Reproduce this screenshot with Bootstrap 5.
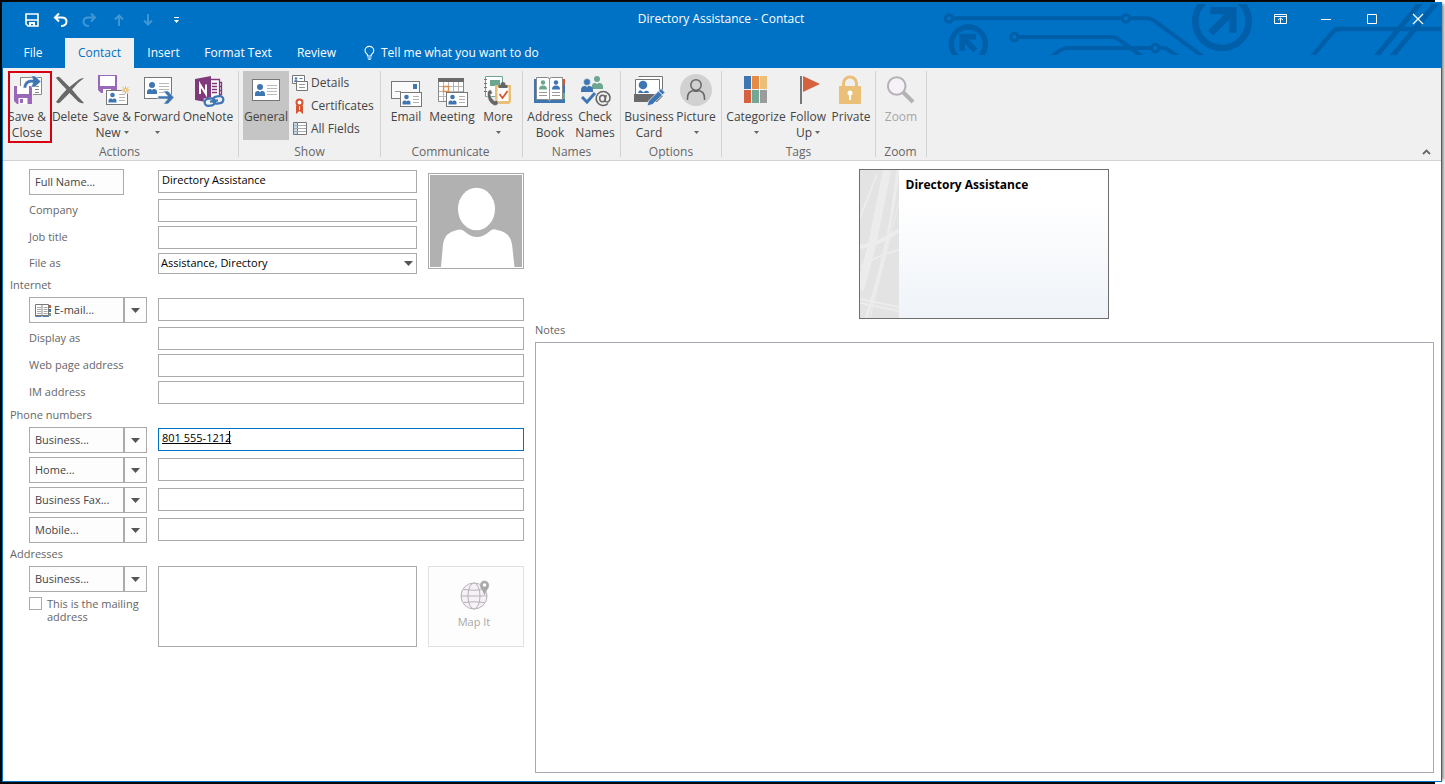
<!DOCTYPE html>
<html lang="en">
<head>
<meta charset="utf-8">
<meta name="viewport" content="width=device-width, initial-scale=1">
<title>Directory Assistance - Contact</title>
<link rel="stylesheet" href="https://cdn.jsdelivr.net/npm/bootstrap@5.3.0/dist/css/bootstrap.min.css">
<style>
:root { --ol-blue: #0072c6; --ol-line: #ababab; --ol-ink: #444; --ol-soft: #666; }
body { font-family: "Open Sans", "Segoe UI", sans-serif; font-size: 12px; line-height: 16px; color: var(--ol-ink);
  background: linear-gradient(#060606, #060606) 0 0 / calc(100% - 10px) 100% no-repeat #fff; padding: 2px 3px 2px 2px; }
button, input, textarea, select { font: inherit; color: inherit; }
button { background: none; border: 0; padding: 0; }
svg { overflow: visible; flex: none; }
.app-window { min-height: calc(100vh - 4px); border: 1px solid var(--ol-blue); border-top: 0; background: #fff; box-shadow: 4px 0 3px -2px #888; }

/* title bar and tabs */
.titlebar { background: var(--ol-blue); color: #fff; height: 66px; }
.circuit { right: 0; top: 0; width: 511px; height: 53px; pointer-events: none; }
.caption-row { height: 34px; padding-right: 2px; }
.quick { left: 14px; top: 0; height: 34px; }
.quick button { width: 29px; height: 34px; }
.quick .off { opacity: .25; }
.winbtns { right: 0; top: 0; }
.winbtns button { width: 46px; height: 32px; }
.tabs { height: 32px; padding-top: 2px; }
.tabs a { height: 30px; line-height: 30px; text-align: center; color: #fff; text-decoration: none; }
.tabs .t-file { width: 60px; margin-right: 2px; }
.tabs .t-contact { width: 69px; background: #f0f0f0; color: var(--ol-blue); }
.tabs .t-insert { width: 59px; }
.tabs .t-format { width: 90px; }
.tabs .t-review { width: 67px; }
.tellme { margin-left: 14px; gap: 6px; }

/* ribbon */
.ribbon { background: #f0f0f0; height: 93px; border-bottom: 1px solid #d2d2d2; padding-top: 3px; }
.rgroup { border-right: 1px solid #d2d2d2; height: 86px; }
.rgroup-title { color: var(--ol-soft); text-align: center; margin-top: 3px; padding-right: 4px; }
.rbtns { height: 70px; }
.rb { display: flex; flex-direction: column; align-items: center; padding-top: 4px; white-space: nowrap; height: 70px; }
.rb svg.ic { width: 32px; height: 32px; margin-bottom: 2px; }
.rb.on { background: #c5c5c5; height: 69px; }
.rb:disabled { color: #a6a6a6; }
.rb .dn { margin: 6px auto; display: block; }
.rb .dn-in { display: inline-block; margin: 0 0 3px 3px; }
.w42 { width: 42px; } .w44 { width: 44px; } .w46 { width: 46px; } .w48 { width: 48px; } .w54 { width: 54px; } .w60 { width: 60px; }
.g-actions { width: 236px; padding-left: 2px; }
.g-show { width: 142px; padding-left: 4px; }
.g-comm { width: 142px; padding-left: 2px; }
.g-names { width: 98px; padding-left: 4px; }
.g-options { width: 101px; padding-left: 4px; }
.g-tags { width: 154px; padding-left: 4px; }
.g-zoom { width: 51px; padding-left: 1px; }
.g-zoom .rgroup-title { padding-right: 2px; }
.smallbtns { padding-left: 3px; }
.smallbtns button { height: 23px; gap: 3px; }
.highlight { left: 5px; top: 0; width: 44px; height: 72px; border: 2px solid #d8000f; }
.collapse-btn { right: 10px; bottom: 5px; line-height: 8px; }

/* form */
.contact-form { padding: 6px 7px 8px 7px; gap: 11px; font-size: 11px; }
.fields { width: 514px; }
.names-col { width: 407px; }
.frow { display: flex; align-items: center; height: 27px; padding-left: 19px; color: var(--ol-soft); }
.frow.tall { height: 30px; }
.frow.short { height: 25px; }
.flabel { width: 129px; flex: none; }
label.flabel { padding-bottom: 2px; }
.fhead { height: 19px; line-height: 18px; color: var(--ol-soft); margin: 0; font-size: 11px; font-weight: 400; }
.fbtn { width: 95px; height: 26px; border: 1px solid var(--ol-line); background: #fdfdfd; color: var(--ol-ink); padding: 0 5px; text-align: left; display: flex; align-items: center; gap: 3px; white-space: nowrap; }
.fdrop { width: 23px; height: 26px; border: 1px solid var(--ol-line); background: #fdfdfd; display: flex; align-items: center; justify-content: center; }
.fin { flex: 1; min-width: 0; width: 100%; height: 23px; border: 1px solid var(--ol-line); border-radius: 0; padding: 0 3px 3px; color: #000; background: #fff; outline: 0; }
.frow.tall .fin { margin-bottom: 2px; }
.fin.active-field { border-color: var(--ol-blue); text-decoration: underline; }
.fin-caret { left: 71px; top: 3px; width: 1px; height: 13px; background: #000; }
select.fin { height: 21px; padding: 0 2px 1px; appearance: none; }
.sel-arrow { right: 4px; top: 8px; pointer-events: none; }
.photo { width: 96px; height: 96px; margin: 6px 0 0 11px; border: 1px solid var(--ol-line); padding: 1px; background: #fff; }
.addr { padding: 2px 0 0 19px; }
.addr-left { width: 129px; }
.addr textarea { height: 81px; border: 1px solid var(--ol-line); resize: none; outline: 0; min-width: 0; }
.mail-check { gap: 5px; margin-top: 5px; line-height: 13px; color: var(--ol-soft); }
.mail-check input { appearance: none; width: 13px; height: 13px; border: 1px solid var(--ol-line); background: #fff; flex: none; margin: 0; }
.mapit { width: 96px; height: 81px; margin-left: 11px; border: 1px solid #e1e1e1; background: #fdfdfd; padding: 0 4px 2px 0; gap: 3px; }
.mapit:disabled { color: #a8a8a8; }
.bizcard { width: 250px; height: 150px; margin-top: 2px; margin-right: 2px; border: 1px solid #6e6e6e; background: linear-gradient(#fff 20%, #eff3f8); }
.bizcard-name { font-size: 12px; font-weight: 700; color: #000; padding: 7px; }
.notes-label { margin-top: 3px; color: var(--ol-soft); }
.notes { border: 1px solid #a5aab5; resize: none; outline: 0; margin-top: 4px; min-height: 100px; border-radius: 0; }
.form-body { min-height: calc(100vh - 164px); }
</style>
</head>
<body>
<svg width="0" height="0" class="position-absolute" aria-hidden="true">
  <defs>
    <symbol id="caret" viewBox="0 0 5 3"><path d="M0 0h5L2.500 3z" fill="#666"/></symbol>
    <symbol id="arrow" viewBox="0 0 9 5"><path d="M0 0h9L4.500 5z" fill="#555"/></symbol>
    <symbol id="vcard" viewBox="0 0 28 22">
      <rect x=".5" y=".5" width="27" height="21" fill="#fff" stroke="#777"/>
      <circle cx="8" cy="8" r="3" fill="#3e76b3"/>
      <path d="M3 17v-2q0-3 3-3h1l1 1.500 1-1.500h1q3 0 3 3v2z" fill="#3e76b3"/>
      <path d="M15 6.500h10M15 9.500h10M15 12.500h10M15 15.500h10" stroke="#b9b9b9"/>
    </symbol>
    <symbol id="vcard-s" viewBox="0 0 22 16">
      <rect x=".5" y=".5" width="21" height="14" fill="#fff" stroke="#777"/>
      <circle cx="6.500" cy="5" r="2.300" fill="#3e76b3"/>
      <path d="M2.500 12.500v-2q0-2 2-2h1l1 1 1-1h1q2 0 2 2v2z" fill="#3e76b3"/>
      <path d="M13 4.500h6M13 7.500h6M13 10.500h6" stroke="#b0b0b0"/>
    </symbol>
  </defs>
</svg>

<div class="app-window d-flex flex-column">
  <header class="titlebar position-relative">
    <svg class="circuit position-absolute" viewBox="0 6 1533 159" fill="none" stroke="#005fa8" stroke-width="12" aria-hidden="true">
      <clipPath id="strip"><rect x="0" y="12" width="1533" height="153"/></clipPath>
      <g clip-path="url(#strip)">
        <circle cx="57" cy="55" r="11" stroke-width="9"/><circle cx="588" cy="55" r="11" stroke-width="9"/>
        <path d="M69 55H576M600 55H650Q662 55 672 62L822 172"/>
        <circle cx="115" cy="132" r="51" stroke-width="16"/>
        <path d="M138 110H96V152M98 112l38 40" stroke-width="17"/>
        <circle cx="253" cy="111" r="11" stroke-width="9"/><path d="M265 111H545Q556 111 566 118L640 172"/>
        <path d="M362 172L386 154Q400 144 412 144H664M689 144Q704 142 716 150L750 174"/><circle cx="676" cy="144" r="11" stroke-width="9"/>
        <circle cx="876" cy="64" r="80" stroke-width="20"/>
        <path d="M840 32H909V98M908 33l-66 66" stroke-width="22"/>
        <path d="M1142 174L1208 97Q1215 87 1226 87H1533" stroke-width="13"/>
        <path d="M1336 172L1475 4M1384 172L1523 4" stroke-width="15"/>
      </g>
    </svg>
    <div class="caption-row d-flex align-items-center justify-content-center">Directory Assistance - Contact</div>
    <div class="quick position-absolute d-flex">
      <button type="button" aria-label="Save"><svg width="14" height="14" viewBox="0 0 14 14"><path d="M1 1h12v12H3l-2-2zM1 7h12" fill="none" stroke="#fff" stroke-width="1.600"/><path d="M4 9h6v4H8v-2H6v2H4z" fill="#fff"/></svg></button>
      <button type="button" aria-label="Undo"><svg width="15" height="14" viewBox="0 0 15 14"><path d="M2 4.500h6.500q5 0 5 4t-5 4.500H8M6 .500L2 4.500l4 4" fill="none" stroke="#fff" stroke-width="2"/></svg></button>
      <button type="button" aria-label="Redo" class="off"><svg width="15" height="14" viewBox="0 0 15 14"><path d="M13 4.500H6.500q-5 0-5 4t5 4.500H7M9 .500l4 4-4 4" fill="none" stroke="#fff" stroke-width="2"/></svg></button>
      <button type="button" aria-label="Previous" class="off"><svg width="10" height="12" viewBox="0 0 10 12"><path d="M5 12V1.500M1 5.500l4-4 4 4" fill="none" stroke="#fff" stroke-width="2"/></svg></button>
      <button type="button" aria-label="Next" class="off"><svg width="10" height="12" viewBox="0 0 10 12"><path d="M5 0v10.500M1 6.500l4 4 4-4" fill="none" stroke="#fff" stroke-width="2"/></svg></button>
      <button type="button" aria-label="Customize toolbar"><svg width="5" height="6" viewBox="0 0 5 6"><path d="M0 0h5v1H0zM0 3h5L2.500 6z" fill="#fff"/></svg></button>
    </div>
    <div class="winbtns position-absolute d-flex">
      <button type="button" aria-label="Ribbon display options"><svg width="13" height="10" viewBox="0 0 13 10"><path d="M.5.5h12v9H.5zM.5 2.500h12M6.500 9V4M4 6l2.500-2L9 6" fill="none" stroke="#fff"/></svg></button>
      <button type="button" aria-label="Minimize"><svg width="10" height="10" viewBox="0 0 10 10"><path d="M0 5.500h10" stroke="#fff"/></svg></button>
      <button type="button" aria-label="Maximize"><svg width="10" height="10" viewBox="0 0 10 10"><path d="M.5.5h9v9h-9z" fill="none" stroke="#fff"/></svg></button>
      <button type="button" aria-label="Close"><svg width="10" height="10" viewBox="0 0 10 10"><path d="M0 0l10 10M10 0L0 10" stroke="#fff" stroke-width="1.200"/></svg></button>
    </div>
    <nav class="tabs d-flex" aria-label="Ribbon tabs">
      <a href="#" class="t-file">File</a>
      <a href="#" class="t-contact">Contact</a>
      <a href="#" class="t-insert">Insert</a>
      <a href="#" class="t-format">Format Text</a>
      <a href="#" class="t-review">Review</a>
      <a href="#" class="tellme d-flex align-items-center"><svg width="11" height="14" viewBox="0 0 11 14"><path d="M3.500 10V8.500Q1 7 1 4.700A4.300 4.200 0 0 1 9.800 4.700Q9.800 7 7.300 8.500V10zM3.500 12h4M4.500 13.500h2" fill="none" stroke="#fff" stroke-width="1.100"/></svg>Tell me what you want to do</a>
    </nav>
  </header>

  <section class="ribbon position-relative d-flex">
    <div class="rgroup g-actions position-relative">
      <div class="rbtns d-flex">
        <button type="button" class="rb w44"><svg class="ic" viewBox="0 0 32 32">
          <path d="M9.500 12V2.500h21v17H22M24 11.500h4M24 14.500h4M24 17.500h4" fill="#fff" stroke="#888"/>
          <path d="M3 11h18v18H6l-3-3z" fill="#9a68b8"/><path d="M6 11h12v8H6z" fill="#fff"/><path d="M7.500 23h9v6h-9z" fill="#fff"/><path d="M9 24h3v4H9z" fill="#9a68b8"/>
          <path d="M12 13Q13 3.500 22 4.500L20 1h4l6 5.500-6 5.500h-4l2-4Q16 7 15.500 13z" fill="#3e76b3" stroke="#f0f0f0" stroke-width=".6"/></svg><span>Save &amp;<br>Close</span></button>
        <button type="button" class="rb w42"><svg class="ic" viewBox="0 0 32 32"><path d="M2 3Q4 1 6 2.500L15.500 12 25 4.500q3-2 5-1.500-7 5-12 11.500Q23 21 30 28q-3 1-6-1.500L15.500 18 6 27.500Q4 29 2 27q5-7 10.500-12.500Q7 9 2 3z" fill="#686868"/></svg><span>Delete</span></button>
        <button type="button" class="rb w42"><svg class="ic" viewBox="0 0 32 32">
          <path d="M2 0h19v18H5l-3-3z" fill="#9a68b8"/><path d="M4 1h15v10H4zM7 14h8v4H7z" fill="#fff"/>
          <use href="#vcard-s" x="10" y="15" width="22" height="16"/>
          <circle cx="29.500" cy="15" r="4" fill="#f0f0f0"/><path d="M29.500 11v8M25.500 15h8M26.700 12.200l5.600 5.600M32.300 12.200l-5.600 5.600" stroke="#e9b75d"/><circle cx="29.500" cy="15" r="1.500" fill="#fff" stroke="#e9b75d"/></svg><span>Save &amp;<br>New<svg class="dn-in" width="5" height="3"><use href="#caret"/></svg></span></button>
        <button type="button" class="rb w48"><svg class="ic" viewBox="0 0 32 32"><use href="#vcard" x="3" y="2" width="28" height="22"/>
          <path d="M17 21h9.500L22.500 16H27l6 6.500-6 6.500h-4.500l4-5H17z" fill="#3e76b3" stroke="#f0f0f0" stroke-width=".6"/></svg><span>Forward<svg class="dn" width="5" height="3"><use href="#caret"/></svg></span></button>
        <button type="button" class="rb w54"><svg class="ic" viewBox="0 0 32 32">
          <path d="M18 4.500h9.500v20H18M27.500 7.500h2v4h-2M27.500 11.500h2v4h-2M27.500 15.500h2v4h-2M20 8.500h5M20 11.500h5M20 14.500h5M20 17.500h5" fill="#fff" stroke="#80397b" stroke-width="1.300"/>
          <path d="M3 4L19 1v27L3 25z" fill="#80397b"/><path d="M8 19V9.500L14 19V9.500" fill="none" stroke="#fff" stroke-width="2"/>
          <g transform="rotate(-8 22 26)" fill="none"><path d="M12 22h20v9H12z" fill="#f0f0f0"/><g stroke="#3e76b3" stroke-width="2.200"><rect x="12.500" y="23" width="10.500" height="7" rx="3.500"/><rect x="21" y="22" width="10.500" height="7" rx="3.500"/><path d="M18 26h8"/></g></g></svg><span>OneNote</span></button>
      </div>
      <div class="rgroup-title">Actions</div>
      <div class="highlight position-absolute"></div>
    </div>
    <div class="rgroup g-show">
      <div class="rbtns d-flex">
        <button type="button" class="rb on w46"><svg class="ic" viewBox="0 0 32 32"><use href="#vcard" x="2" y="4" width="28" height="22"/></svg><span>General</span></button>
        <div class="smallbtns d-flex flex-column">
          <button type="button" class="d-flex align-items-center"><svg width="16" height="16" viewBox="0 0 16 16"><path d="M.5.5h12v8H.5z" fill="#fff" stroke="#777"/><circle cx="4" cy="3.500" r="1.300" fill="#3e76b3"/><path d="M2 7q0-2 2-2t2 2zM7.500 3h3v1h-3z" fill="#3e76b3"/><path d="M4.500 6.500h11v9h-11z" fill="#fff" stroke="#777"/><path d="M7 9.500h6M7 12.500h6" stroke="#999"/></svg>Details</button>
          <button type="button" class="d-flex align-items-center"><svg width="16" height="16" viewBox="0 0 16 16"><circle cx="7.500" cy="4.500" r="3" fill="#fff" stroke="#d65532" stroke-width="2"/><path d="M4 7.500h7V16l-3.500-3L4 16z" fill="#d65532"/><path d="M7.500 8v4" stroke="#f0f0f0"/></svg>Certificates</button>
          <button type="button" class="d-flex align-items-center"><svg width="16" height="16" viewBox="0 0 16 16"><path d="M1.500 1.500h13v12h-13z" fill="#fff" stroke="#777"/><path d="M2 2h3v11H2z" fill="#c3d9ee"/><path d="M5.500 2v11" stroke="#777"/><path d="M2 4.500h12M2 7.500h12M2 10.500h12" stroke="#aaa"/></svg>All Fields</button>
        </div>
      </div>
      <div class="rgroup-title">Show</div>
    </div>
    <div class="rgroup g-comm">
      <div class="rbtns d-flex">
        <button type="button" class="rb w46"><svg class="ic" viewBox="0 0 32 32"><rect x="1.500" y="6.500" width="28" height="17" fill="#fafafa" stroke="#777"/><path d="M23 9h4v5h-4z" fill="#3e76b3"/><path d="M5 16.500h6" stroke="#999"/><use href="#vcard-s" x="10" y="17" width="22" height="16"/></svg><span>Email</span></button>
        <button type="button" class="rb w46"><svg class="ic" viewBox="0 0 32 32"><path d="M2.500 4.500h25v22h-25z" fill="#fff" stroke="#888"/><path d="M2 3h26v4H2z" fill="#6a6a6a"/><path d="M7.500 7v19M12.500 7v19M17.500 7v19M22.500 7v19M3 11.500h24M3 16.500h24M3 21.500h24" stroke="#b5b5b5"/><path d="M7.500 11.500h5v5h-5z" fill="#fff" stroke="#e58b43" stroke-width="1.400"/><use href="#vcard-s" x="10" y="17" width="22" height="16"/></svg><span>Meeting</span></button>
        <button type="button" class="rb w46"><svg class="ic" viewBox="0 0 32 32"><path d="M3.500 1.500h17v20h-17z" fill="#fff" stroke="#6ba68e"/><path d="M8 5h10v6H8z" fill="#6ba68e"/><path d="M2 4.500h3M2 8.500h3M2 12.500h3M2 16.500h3" stroke="#777"/>
          <path d="M13 10h16v17l-2 2H13z" fill="#eabf77"/><path d="M15.500 12h11v14h-11z" fill="#fff"/><path d="M16.500 10h2q0-3 2.500-3t2.500 3h2v3h-9z" fill="#666"/><path d="M17.500 19l3 4 5-7" fill="none" stroke="#d65532" stroke-width="1.800"/>
          <path d="M5.500 17q2-3 3.500-2l1.500 3-2 1.500q1 4.500 4 6.500l2.500-1 1.500 3q-1.500 3.500-4.500 2.500Q4.500 27 5.500 17z" fill="#666" stroke="#f0f0f0" stroke-width=".6"/></svg><span>More<svg class="dn" width="5" height="3"><use href="#caret"/></svg></span></button>
      </div>
      <div class="rgroup-title">Communicate</div>
    </div>
    <div class="rgroup g-names">
      <div class="rbtns d-flex">
        <button type="button" class="rb w46"><svg class="ic" viewBox="0 0 32 32"><path d="M0 4h31v24H0z" fill="#3e76b3"/><path d="M29 4h2v6h-2z" fill="#d65532"/><path d="M29 18h2v6h-2z" fill="#6ba68e"/>
          <path d="M2.500 2.500h11q2 0 2 2 0-2 2-2h11v22h-11q-2 0-2 2 0-2-2-2h-11z" fill="#fff" stroke="#888"/><path d="M15.500 4v21" stroke="#999"/>
          <circle cx="9" cy="7.500" r="2.200" fill="#6ba68e"/><path d="M5 14.500q0-4 4-4t4 4z" fill="#6ba68e"/><circle cx="22" cy="7.500" r="2.200" fill="#3e76b3"/><path d="M18 14.500q0-4 4-4t4 4z" fill="#3e76b3"/><path d="M5 17.500h8M5 20.500h8M18 17.500h8M18 20.500h8" stroke="#999"/></svg><span>Address<br>Book</span></button>
        <button type="button" class="rb w44"><svg class="ic" viewBox="0 0 32 32"><circle cx="18" cy="4" r="3" fill="#6ba68e"/><path d="M13 14v-3q0-3 3-3h1l1 1.500 1-1.500h1q4 0 4 4v2z" fill="#6ba68e"/>
          <circle cx="8" cy="7" r="3.500" fill="#3e76b3" stroke="#f0f0f0" stroke-width=".6"/><path d="M2 17v-2q0-4 4-4h1l1 1.500 1-1.500h1q4 0 4 4v2z" fill="#3e76b3"/><path d="M3 22l5 5 8-9" fill="none" stroke="#3e76b3" stroke-width="3"/>
          <path d="M29 28.500A7 7 0 1 1 31 22q0 5-3 5-2.500 0-1.500-4l.700-3" fill="none" stroke="#666" stroke-width="1.500"/><ellipse cx="23.500" cy="23.500" rx="2.800" ry="3.300" fill="none" stroke="#666" stroke-width="1.500"/></svg><span>Check<br>Names</span></button>
      </div>
      <div class="rgroup-title">Names</div>
    </div>
    <div class="rgroup g-options">
      <div class="rbtns d-flex">
        <button type="button" class="rb w48"><svg class="ic" viewBox="0 0 32 32"><path d="M5.500 1.500h24v16h-2M2.500 4.500h24v16h-24z" fill="#fff" stroke="#777"/><circle cx="10" cy="10" r="4.300" fill="#3e76b3"/><path d="M5 18q1-4 4-2l1.500 1.500L12 16q4-1 4 2z" fill="#3e76b3"/><path d="M1 19h25l4 2-6 6H1z" fill="#6a6a6a"/>
          <path d="M14 31l1.500-5L28 13.500l4 4L19.500 29.500z" fill="#3e76b3" stroke="#f0f0f0" stroke-width=".8"/><path d="M25.500 16l4 4" stroke="#fff"/></svg><span>Business<br>Card</span></button>
        <button type="button" class="rb w46"><svg class="ic" viewBox="0 0 32 32"><circle cx="16" cy="15" r="16" fill="#d1d1d1"/><g fill="none" stroke="#666" stroke-width="1.500"><circle cx="16" cy="10" r="5.200"/><path d="M7.500 25v-2q0-6.500 6-7.500 2.500 1.500 5 0 6 1 6 7.500v2"/></g></svg><span>Picture<svg class="dn" width="5" height="3"><use href="#caret"/></svg></span></button>
      </div>
      <div class="rgroup-title">Options</div>
    </div>
    <div class="rgroup g-tags">
      <div class="rbtns d-flex">
        <button type="button" class="rb w60"><svg class="ic" viewBox="0 0 32 32"><path d="M4 1h7v13H4z" fill="#3e76b3"/><path d="M12 1h7v13h-7z" fill="#e58b43"/><path d="M20 1h7v13h-7z" fill="#eabf77"/><path d="M4 15h7v13H4z" fill="#d6613f"/><path d="M12 15h7v13h-7z" fill="#73a895"/><path d="M20 15h7v13h-7z" fill="#9b9b9b"/></svg><span>Categorize<svg class="dn" width="5" height="3"><use href="#caret"/></svg></span></button>
        <button type="button" class="rb w44"><svg class="ic" viewBox="0 0 32 32"><path d="M8 1h2v28H8z" fill="#777"/><path d="M11 1l17 8-17 8z" fill="#d6613f"/></svg><span>Follow<br>Up<svg class="dn-in" width="5" height="3"><use href="#caret"/></svg></span></button>
        <button type="button" class="rb w42"><svg class="ic" viewBox="0 0 32 32"><path d="M8.500 12V8.500a6.500 6.500 0 0 1 13 0V12" fill="none" stroke="#eabf77" stroke-width="3"/><rect x="4" y="11" width="22" height="18" rx="1" fill="#eabf77"/><circle cx="15" cy="18" r="2.500" fill="#fff"/><path d="M14 19h2v6h-2z" fill="#fff"/></svg><span>Private</span></button>
      </div>
      <div class="rgroup-title">Tags</div>
    </div>
    <div class="rgroup g-zoom">
      <div class="rbtns d-flex">
        <button type="button" class="rb w48" disabled><svg class="ic" viewBox="0 0 32 32"><path d="M18 17l10 10" stroke="#b5b2b5" stroke-width="4"/><circle cx="11.700" cy="11" r="8.800" fill="#f6f1f8" stroke="#b5b2b5" stroke-width="2"/></svg><span>Zoom</span></button>
      </div>
      <div class="rgroup-title">Zoom</div>
    </div>
    <button type="button" class="collapse-btn position-absolute" aria-label="Collapse the ribbon"><svg width="9" height="6" viewBox="0 0 9 6"><path d="M1 5l3.500-3.500L8 5" fill="none" stroke="#666" stroke-width="1.800"/></svg></button>
  </section>

  <main class="contact-form form-body d-flex flex-grow-1">
    <form class="fields flex-shrink-0">
      <div class="d-flex">
        <div class="names-col">
          <div class="frow tall"><div class="flabel"><button type="button" class="fbtn">Full Name...</button></div><input class="fin" type="text" value="Directory Assistance" aria-label="Full name"></div>
          <div class="frow"><label class="flabel" for="company">Company</label><input class="fin" id="company" type="text"></div>
          <div class="frow"><label class="flabel" for="job">Job title</label><input class="fin" id="job" type="text"></div>
          <div class="frow short"><label class="flabel" for="fileas">File as</label><div class="position-relative d-flex flex-grow-1"><select class="fin" id="fileas"><option>Assistance, Directory</option></select><svg class="sel-arrow position-absolute" width="9" height="5"><use href="#arrow"/></svg></div></div>
        </div>
        <div class="photo"><svg class="d-block w-100 h-100" viewBox="0 0 92 92" role="img" aria-label="Contact photo"><path d="M0 0h92v92H0z" fill="#b1b1b1"/><ellipse cx="46.500" cy="34" rx="18.500" ry="21.300" fill="#fff"/><path d="M11 92l2-23Q15 57 27 55q4-1.500 7 1 13 12 26 0 3-3 7-1 13 2 15 14l2.500 23z" fill="#fff"/></svg></div>
      </div>
      <h2 class="fhead">Internet</h2>
      <div class="frow tall"><div class="flabel d-flex"><button type="button" class="fbtn"><svg width="16" height="13" viewBox="0 0 16 13"><path d="M.5.5h13v11H.5z" fill="#fff" stroke="#777"/><path d="M.5 1v11.500h6M7.500 12.500H14" fill="none" stroke="#4f81b5"/><path d="M7 .5v12" stroke="#888"/><path d="M2 3.500h4M2 5.500h4M2 7.500h4M2 9.500h4M8.500 3.500h4M8.500 5.500h4M8.500 7.500h4M8.500 9.500h4" stroke="#aaa"/><path d="M14 1h2v3h-2z" fill="#d65532"/><path d="M14 5h2v3h-2z" fill="#3e76b3"/><path d="M14 9h2v3h-2z" fill="#6ba68e"/></svg>E-mail...</button><button type="button" class="fdrop" aria-label="Choose e-mail"><svg width="9" height="5"><use href="#arrow"/></svg></button></div><input class="fin" type="text" aria-label="E-mail"></div>
      <div class="frow"><label class="flabel" for="display">Display as</label><input class="fin" id="display" type="text"></div>
      <div class="frow"><label class="flabel" for="web">Web page address</label><input class="fin" id="web" type="text"></div>
      <div class="frow"><label class="flabel" for="im">IM address</label><input class="fin" id="im" type="text"></div>
      <h2 class="fhead">Phone numbers</h2>
      <div class="frow tall"><div class="flabel d-flex"><button type="button" class="fbtn">Business...</button><button type="button" class="fdrop" aria-label="Choose phone 1"><svg width="9" height="5"><use href="#arrow"/></svg></button></div><div class="position-relative d-flex flex-grow-1"><input class="fin active-field" type="text" value="801 555-1212" aria-label="Business phone"><span class="fin-caret position-absolute"></span></div></div>
      <div class="frow tall"><div class="flabel d-flex"><button type="button" class="fbtn">Home...</button><button type="button" class="fdrop" aria-label="Choose phone 2"><svg width="9" height="5"><use href="#arrow"/></svg></button></div><input class="fin" type="text" aria-label="Home phone"></div>
      <div class="frow tall"><div class="flabel d-flex"><button type="button" class="fbtn">Business Fax...</button><button type="button" class="fdrop" aria-label="Choose phone 3"><svg width="9" height="5"><use href="#arrow"/></svg></button></div><input class="fin" type="text" aria-label="Business fax"></div>
      <div class="frow tall"><div class="flabel d-flex"><button type="button" class="fbtn">Mobile...</button><button type="button" class="fdrop" aria-label="Choose phone 4"><svg width="9" height="5"><use href="#arrow"/></svg></button></div><input class="fin" type="text" aria-label="Mobile phone"></div>
      <h2 class="fhead">Addresses</h2>
      <div class="addr d-flex">
        <div class="addr-left flex-shrink-0">
          <div class="d-flex"><button type="button" class="fbtn">Business...</button><button type="button" class="fdrop" aria-label="Choose address"><svg width="9" height="5"><use href="#arrow"/></svg></button></div>
          <div class="mail-check d-flex"><input type="checkbox" id="mailing"><label for="mailing">This is the mailing<br>address</label></div>
        </div>
        <textarea class="flex-grow-1" aria-label="Address"></textarea>
        <button type="button" class="mapit d-flex flex-column align-items-center justify-content-center" disabled><svg width="26" height="30" viewBox="1 2 26 30"><g fill="#f6f1f8" stroke="#b5b2b5"><circle cx="14" cy="17" r="13"/><ellipse cx="14" cy="17" rx="6" ry="13"/><path d="M1 17h26M3.500 10.500q10.500 1.500 21 0M3.500 23.500q10.500-1.500 21 0" fill="none"/></g><path d="M24.500 1.500a4.800 4.800 0 0 1 4.800 4.800q0 3-2.300 5.200-1.500 2-2.500 7-1-5-2.500-7-2.300-2.200-2.300-5.200a4.800 4.800 0 0 1 4.800-4.800z" fill="#a9a9a9" stroke="#fdfdfd" stroke-width=".5"/><circle cx="24.500" cy="6" r="1.800" fill="#fff"/></svg>Map It</button>
      </div>
    </form>
    <section class="d-flex flex-column flex-grow-1">
      <div class="bizcard d-flex align-self-center">
        <svg width="39" height="148" viewBox="0 0 39 148" aria-hidden="true"><clipPath id="side"><path d="M0 0h39v148H0z"/></clipPath><path d="M0 0h39v148H0z" fill="#e3e3e3"/><g clip-path="url(#side)" fill="none" stroke="#ececec"><path d="M27 0L12 75 0 120" stroke-width="8"/><path d="M38 0Q28 85 6 148" stroke-width="3"/><path d="M42 20L10 148" stroke-width="1"/><path d="M0 77Q20 74 39 60" stroke-width="4"/><path d="M0 97Q20 84 39 80M0 129l39 8M0 133l39 8M0 48L17 4" stroke-width="2"/></g></svg>
        <div class="bizcard-name">Directory Assistance</div>
      </div>
      <label class="notes-label" for="notes">Notes</label>
      <textarea class="notes flex-grow-1 w-100" id="notes"></textarea>
    </section>
  </main>
</div>
<script src="https://cdn.jsdelivr.net/npm/bootstrap@5.3.0/dist/js/bootstrap.bundle.min.js"></script>
</body>
</html>
